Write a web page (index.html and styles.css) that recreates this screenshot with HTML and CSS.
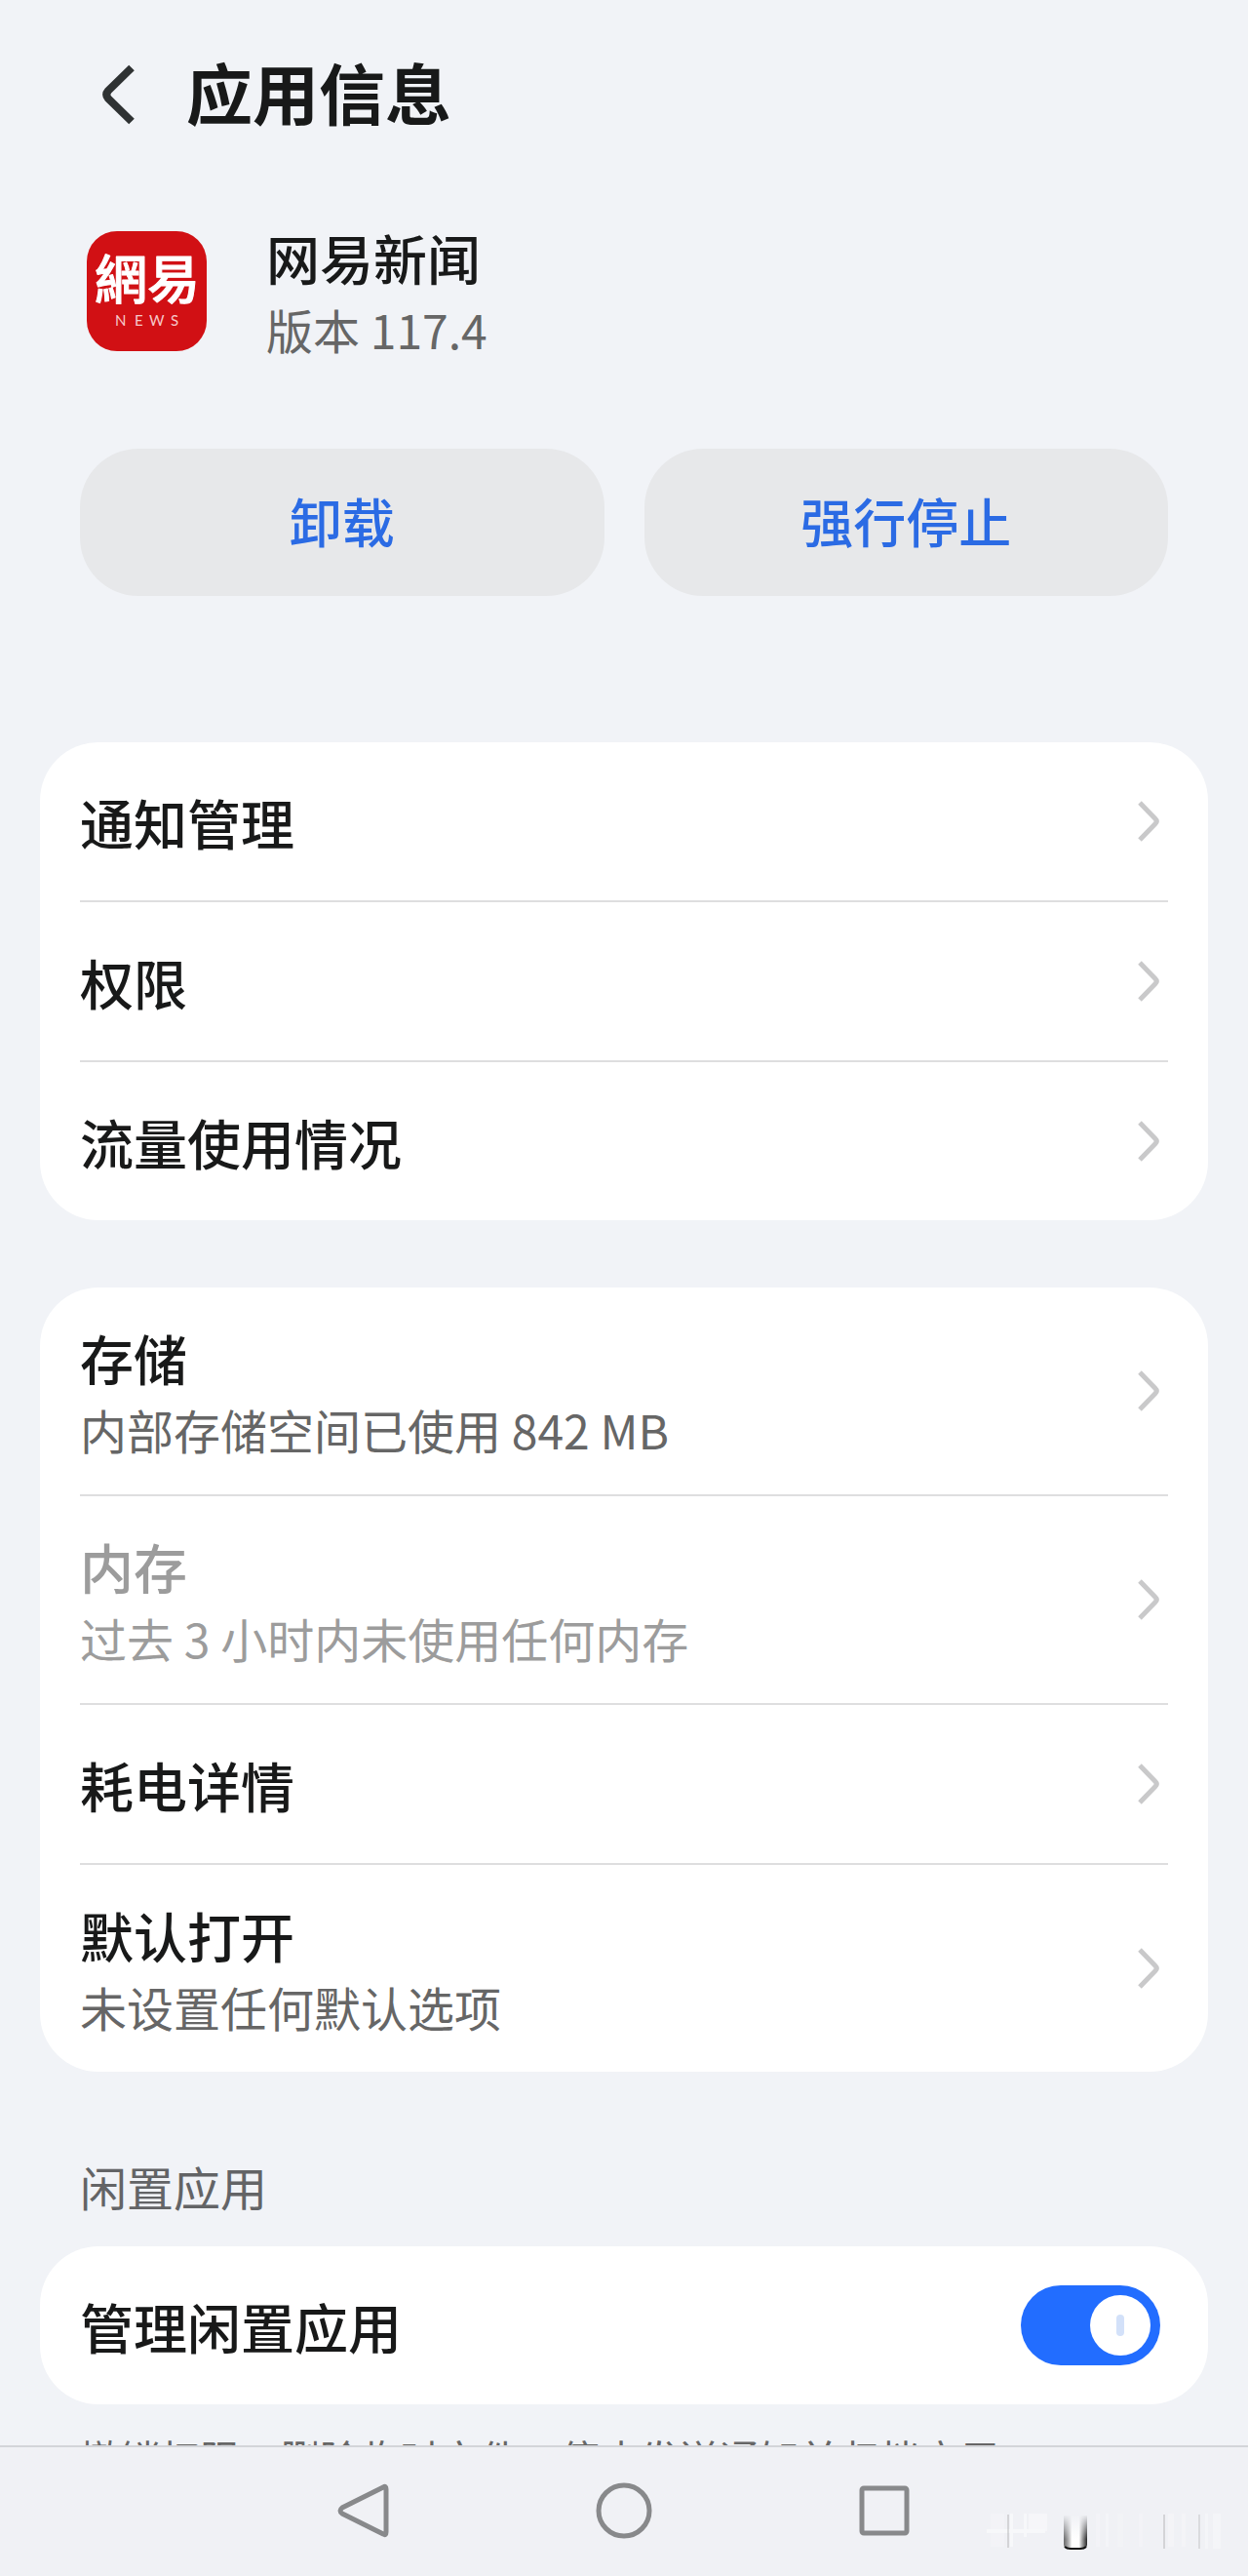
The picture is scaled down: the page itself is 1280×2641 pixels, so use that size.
FILE: index.html
```html
<!DOCTYPE html>
<html lang="zh-CN">
<head>
  <meta charset="UTF-8">
  <meta name="viewport" content="width=device-width">
  <title>应用信息</title>
  <link rel="stylesheet" href="styles.css">
</head>

<body>

<!-- shared icons -->
<svg class="defs" width="0" height="0" aria-hidden="true">
  <symbol id="arrow" viewBox="0 0 24 44">
    <path d="M3 3 L19 19.5 Q21.500 22 19 24.500 L3 41" fill="none" stroke="#c9c9ca" stroke-width="5"/>
  </symbol>
</svg>

<main>
  <header class="top">
    <button class="back" aria-label="返回">
      <svg width="34" height="62" viewBox="0 0 34 62">
        <path d="M30 3.500 L6 27 Q2.500 31 6 35 L30 58.500" fill="none" stroke="#2f3233" stroke-width="8"/>
      </svg>
    </button>
    <h1>应用信息</h1>
  </header>

  <section class="app">
    <svg class="logo" viewBox="0 0 123 123" role="img" aria-label="网易新闻">
      <rect width="123" height="123" rx="31" fill="#d11014"/>
      <text class="logo-name" x="8" y="70">網易</text>
      <text class="logo-sub" x="29 49 64 86" y="97">NEWS</text>
    </svg>
    <div class="text">
      <h2 class="name">网易新闻</h2>
      <p class="sub">版本 117.4</p>
    </div>
  </section>

  <div class="actions">
    <button>卸载</button>
    <button>强行停止</button>
  </div>

  <nav class="card">
    <a class="row" href="#">
      <span class="name">通知管理</span>
      <svg class="arrow"><use href="#arrow"/></svg>
    </a>
    <a class="row" href="#">
      <span class="name">权限</span>
      <svg class="arrow"><use href="#arrow"/></svg>
    </a>
    <a class="row" href="#">
      <span class="name">流量使用情况</span>
      <svg class="arrow"><use href="#arrow"/></svg>
    </a>
  </nav>

  <nav class="card">
    <a class="row tall" href="#">
      <span class="text">
        <span class="name">存储</span>
        <span class="sub">内部存储空间已使用 842 MB</span>
      </span>
      <svg class="arrow"><use href="#arrow"/></svg>
    </a>
    <a class="row tall off" href="#" aria-disabled="true">
      <span class="text">
        <span class="name">内存</span>
        <span class="sub">过去 3 小时内未使用任何内存</span>
      </span>
      <svg class="arrow"><use href="#arrow"/></svg>
    </a>
    <a class="row" href="#">
      <span class="name">耗电详情</span>
      <svg class="arrow"><use href="#arrow"/></svg>
    </a>
    <a class="row tall" href="#">
      <span class="text">
        <span class="name">默认打开</span>
        <span class="sub">未设置任何默认选项</span>
      </span>
      <svg class="arrow"><use href="#arrow"/></svg>
    </a>
  </nav>

  <h3 class="group">闲置应用</h3>
  <div class="card idle">
    <div class="row">
      <label class="name" for="idle">管理闲置应用</label>
      <input class="switch" type="checkbox" id="idle" checked>
    </div>
  </div>
  <p class="note">撤销权限、删除临时文件、停止发送通知并归档应用</p>
</main>

<footer class="keys">
  <button aria-label="返回键">
    <svg viewBox="0 0 58 58">
      <path d="M49 5 Q52 3 52 7 V51 Q52 55 49 53 L7 32 Q3 29 7 26 Z"/>
    </svg>
  </button>
  <button aria-label="主屏幕">
    <svg viewBox="0 0 58 58"><circle cx="29" cy="29" r="26"/></svg>
  </button>
  <button aria-label="最近任务">
    <svg viewBox="0 0 58 58"><rect x="6" y="6" width="46" height="46" rx="2"/></svg>
  </button>
  <svg class="mark" viewBox="0 0 244 40" aria-hidden="true">
    <defs>
      <linearGradient id="side" x1="0" x2="1" y1="0" y2="0">
        <stop offset="0" stop-color="#333" stop-opacity="0.7"/>
        <stop offset="0.35" stop-color="#fff"/>
        <stop offset="0.65" stop-color="#fff"/>
        <stop offset="1" stop-color="#111" stop-opacity="0.9"/>
      </linearGradient>
      <linearGradient id="fade" x1="0" x2="0" y1="0" y2="1">
        <stop offset="0" stop-color="#f0f1f5"/>
        <stop offset="0.7" stop-color="#f0f1f5" stop-opacity="0"/>
      </linearGradient>
    </defs>
    <g fill="#fff" opacity="0.5">
      <rect x="4" y="2" width="14" height="34" opacity="0.4"/>
      <rect x="0" y="18" width="60" height="4"/>
      <rect x="24" y="2" width="3" height="34"/>
      <rect x="38" y="2" width="3" height="24"/>
      <rect x="43" y="2" width="19" height="18" opacity="0.8"/>
      <rect x="112" y="2" width="4" height="34" opacity="0.4"/>
      <rect x="122" y="2" width="3" height="34" opacity="0.6"/>
      <rect x="134" y="2" width="6" height="34" opacity="0.3"/>
      <rect x="156" y="2" width="4" height="34" opacity="0.4"/>
      <rect x="186" y="2" width="6" height="34" opacity="0.5"/>
      <rect x="200" y="2" width="4" height="34" opacity="0.5"/>
      <rect x="224" y="2" width="3" height="36" opacity="0.6"/>
      <rect x="232" y="2" width="8" height="36" opacity="0.6"/>
    </g>
    <path d="M79 4 H103 V34 Q103 38 96 38 H86 Q79 38 79 34 Z" fill="url(#side)"/>
    <path d="M78 3 H104 V39 H78 Z" fill="url(#fade)"/>
    <path d="M80 36 Q82 38 86 38 H96 Q100 38 102 36" fill="none" stroke="#111" stroke-width="2"/>
    <g fill="#aaa">
      <rect x="21" y="3" width="2" height="34" opacity="0.4"/>
      <rect x="181" y="3" width="2" height="35" opacity="0.4"/>
      <rect x="217" y="3" width="2" height="35" opacity="0.3"/>
    </g>
  </svg>
</footer>

</body>
</html>
```
FILE: styles.css
```css
* {
    box-sizing: border-box;
}
body {
    margin: 0;
    height: 100vh;
    display: flex;
    flex-direction: column;
    background: #f1f3f7;
    color: #181919;
    font-family: "Noto Sans CJK SC", sans-serif;
}
h1, h2, h3, p {
    margin: 0;
}
button {
    border: 0;
    padding: 0;
    background: none;
    font-family: inherit;
}
svg {
    display: block;
}
.defs {
    position: absolute;
}
main {
    flex: 1;
    min-height: 0;
    overflow: hidden;
    padding: 57px 41px 0;
}

/* title bar */
.top {
    display: flex;
    align-items: center;
    gap: 52px;
    padding-left: 64px;
}
h1 {
    padding-bottom: 6px;
    font-size: 68px;
    line-height: 74px;
    font-weight: 700;
}

/* app name and version */
.app {
    display: flex;
    align-items: center;
    gap: 61px;
    margin-top: 85px;
    padding-left: 48px;
}
.logo {
    width: 123px;
    height: 123px;
}
.logo-name {
    font: 500 54px "Noto Sans CJK TC", sans-serif;
    fill: #fff;
    stroke: #fff;
    stroke-width: 1px;
    stroke-linejoin: round;
}
.logo-sub {
    font: 400 15px Lato, sans-serif;
    fill: #f6c9c9;
}
.text {
    display: flex;
    flex-direction: column;
    padding-bottom: 4px;
}
.name {
    font-size: 55px;
    line-height: 82px;
    font-weight: 500;
}
.sub {
    font-size: 48px;
    line-height: 66px;
    color: #666;
}

.actions {
    display: flex;
    gap: 41px;
    margin: 86px 41px 150px;
}
.actions button {
    flex: 1;
    height: 151px;
    padding-bottom: 4px;
    border-radius: 60px;
    background: #e7e8ea;
    color: #2b6be4;
    font-size: 54px;
    font-weight: 500;
}

/* white lists */
.card {
    padding: 0 41px;
    border-radius: 60px;
    background: #fff;
}
.card + .card {
    margin-top: 69px;
}
.row {
    display: flex;
    align-items: center;
    justify-content: space-between;
    padding: 40px 8px 40px 0;
    color: inherit;
    text-decoration: none;
}
.row.tall {
    padding-top: 30px;
    padding-bottom: 30px;
}
.row + .row {
    border-top: 2px solid #dededf;
}
.off .name, .off .sub {
    color: #9c9c9c;
}
.arrow {
    width: 24px;
    height: 44px;
}
.group {
    margin: 87px 41px 32px;
    font-size: 48px;
    line-height: 60px;
    font-weight: 400;
    color: #636466;
}

.switch {
    appearance: none;
    position: relative;
    display: flex;
    justify-content: flex-end;
    width: 143px;
    height: 82px;
    margin: 0;
    padding: 10px;
    border-radius: 41px;
    background: #c9c9ca;
}
.switch:checked {
    background: #226dff;
}
.switch::before {
    content: "";
    width: 62px;
    height: 62px;
    border-radius: 50%;
    background: #fff;
}
.switch::after {
    content: "";
    position: absolute;
    top: 30px;
    right: 37px;
    width: 8px;
    height: 22px;
    border-radius: 4px;
    background: #d3e1f9;
}
.note {
    margin: 24px 41px 0;
    font-size: 41px;
    line-height: 60px;
    color: #666;
}

/* system keys */
.keys {
    position: relative;
    flex: none;
    display: flex;
    justify-content: center;
    gap: 209px;
    padding: 36px 0 38px;
    border-top: 2px solid #d3d5d9;
    background: #f0f1f5;
}
.keys button svg {
    width: 58px;
    height: 58px;
    fill: none;
    stroke: #88898b;
    stroke-width: 5;
}
.mark {
    position: absolute;
    right: 24px;
    bottom: 26px;
    width: 244px;
    height: 40px;
}
```
